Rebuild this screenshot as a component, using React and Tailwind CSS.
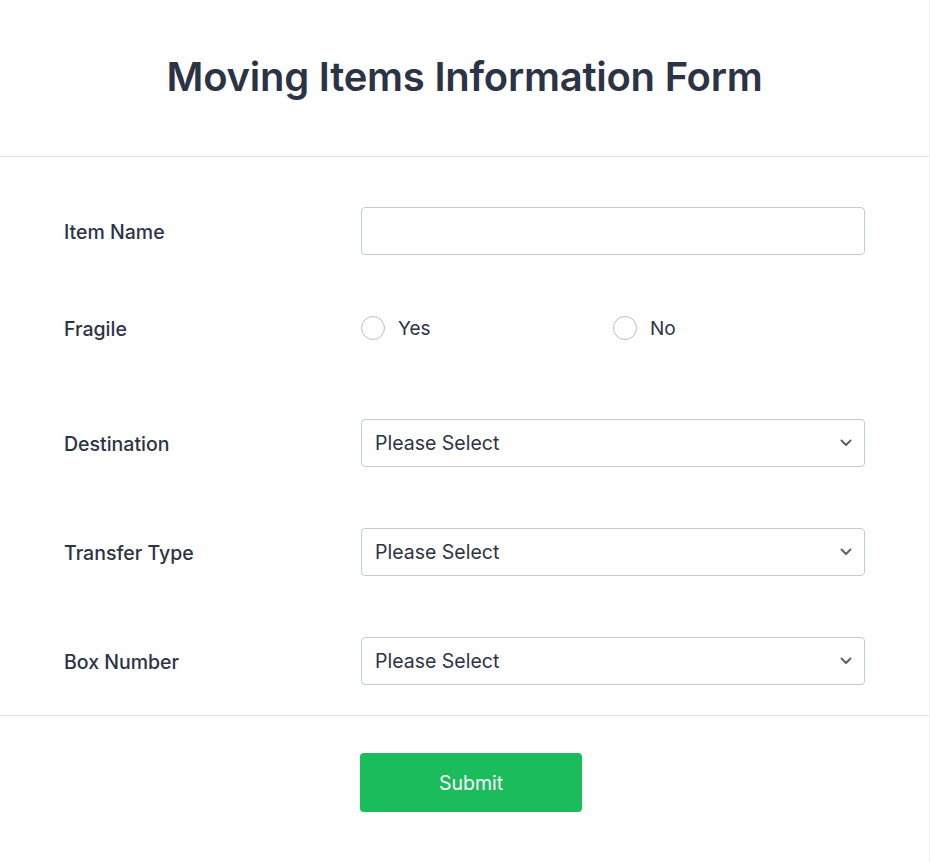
import React from "react";

const font = { fontFamily: "Inter, 'Noto Sans', sans-serif" };

function Chevron() {
  return (
    <svg width="12" height="8" viewBox="0 0 12 8" fill="none" className="shrink-0">
      <path d="M1.5 1.5L6 6L10.5 1.5" stroke="#5b6272" strokeWidth="2" strokeLinecap="round" strokeLinejoin="round" />
    </svg>
  );
}

function SelectBox() {
  return (
    <div className="flex h-[48px] w-full items-center justify-between rounded-[4px] border border-[#c3cad8] bg-white pl-[13px] pr-[12px]">
      <span className="pt-[2px] text-[19.5px] text-[#2c3345]">Please Select</span>
      <Chevron />
    </div>
  );
}

function Radio({ label }) {
  return (
    <div className="flex items-center gap-[13px]">
      <span className="h-[24px] w-[24px] rounded-full border border-[#b8bdc9] bg-white" />
      <span className="pt-[2px] text-[19px] text-[#2c3345]">{label}</span>
    </div>
  );
}

function Row({ label, children, className }) {
  return (
    <div className={"flex items-center " + className}>
      <div className="w-[297px] shrink-0 pt-[3px] text-[19.5px] font-medium text-[#2c3345]">{label}</div>
      <div className="flex-1">{children}</div>
    </div>
  );
}

export default function App() {
  return (
    <div style={font} className="min-h-[862px] w-[930px] bg-white border-r border-[#eef0f3]">
      <div className="flex h-[157px] items-center justify-center border-b border-[#e3e5ea] pb-[2px]">
        <h1 className="text-[40px] font-semibold leading-[48px] tracking-[-0.25px] text-[#2c3345]">Moving Items Information Form</h1>
      </div>
      <div className="pl-[64px] pr-[64px] pt-[50px]">
        <Row label="Item Name" className="h-[48px]">
          <div className="h-[48px] w-full rounded-[4px] border border-[#c3cad8] bg-white" />
        </Row>
        <Row label="Fragile" className="mt-[61px] h-[24px]">
          <div className="grid grid-cols-2">
            <Radio label="Yes" />
            <Radio label="No" />
          </div>
        </Row>
        <Row label="Destination" className="mt-[79px] h-[48px]">
          <SelectBox />
        </Row>
        <Row label="Transfer Type" className="mt-[61px] h-[48px]">
          <SelectBox />
        </Row>
        <Row label="Box Number" className="mt-[61px] h-[48px]">
          <SelectBox />
        </Row>
      </div>
      <div className="mt-[30px] border-t border-[#e3e5ea] pt-[37px] pb-[50px] pl-[360px]">
        <button className="flex h-[59px] w-[222px] items-center justify-center rounded-[4px] bg-[#1abc5c] pt-[2px] text-[19.5px] font-normal text-white">
          Submit
        </button>
      </div>
    </div>
  );
}
